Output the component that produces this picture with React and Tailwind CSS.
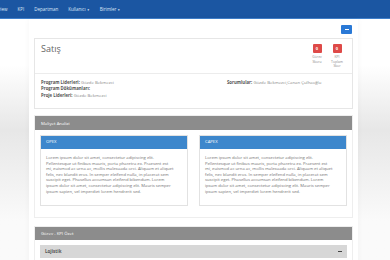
import React from "react";

const lorem = [
  "Lorem ipsum dolor sit amet, consectetur adipiscing elit.",
  "Pellentesque ut finibus mauris, porta pharetra ex. Praesent est",
  "mi, euismod ac urna ac, mollis malesuada orci. Aliquam et aliquet",
  "felis, nec blandit eros. In semper eleifend nulla, in placerat sem",
  "suscipit eget. Phasellus accumsan eleifend bibendum. Lorem",
  "ipsum dolor sit amet, consectetur adipiscing elit. Mauris semper",
  "ipsum sapien, vel imperdiet lorem hendrerit sed.",
];

const navItems = [
  { text: "Overview" },
  { text: "KPI" },
  { text: "Departman" },
  { text: "Kullanıcı", caret: true },
  { text: "Birimler", caret: true },
];

// Cost box (OPEX / CAPEX)
const CostBox = ({ title }) => (
  <div className="flex-1 border border-[#e2e2e2] bg-white">
    <div className="h-[13px] bg-[#3d87cc] flex items-center px-[5px] text-[4.2px] text-white">
      {title}
    </div>
    <div className="h-[56px] px-[5px] pt-[6px] text-[4.2px] text-[#737373]">
      {lorem.map((line, i) => (
        <div key={i} className="h-[5.6px] leading-[5.6px] whitespace-nowrap">{line}</div>
      ))}
    </div>
  </div>
);

const Badge = ({ label }) => (
  <div className="flex flex-col items-center w-[14px]">
    <div className="w-[9px] h-[9px] bg-[#de4a48] rounded-[1px] flex items-center justify-center text-[4px] font-bold text-white">
      0
    </div>
    <div className="mt-[2px] text-[3.4px] leading-[4.6px] text-[#8a8a8a] text-center">
      {label.map((l, i) => (
        <div key={i} className="h-[4.6px]">{l}</div>
      ))}
    </div>
  </div>
);

export default function App() {
  return (
    <div
      className="h-[260px] overflow-hidden bg-linear-to-b from-white from-25% via-[#e7e7e7] via-50% to-[#fafafa] to-85%"
      style={{ fontFamily: '"Open Sans", "Liberation Sans", sans-serif' }}
    >
      {/* Navbar */}
      <div className="h-[19px] bg-[#1b56a2] border-b border-[#3f7fcb] flex items-center">
        <div className="flex items-center -ml-[17px] text-[4.5px] text-[#dfe9f7]">
          {navItems.map((item) => (
            <span key={item.text} className="px-[5px] whitespace-nowrap">
              {item.text}
              {item.caret && <span className="ml-[1px] text-[3px]">▼</span>}
            </span>
          ))}
        </div>
      </div>

      {/* Content */}
      <div className="ml-[29px] w-[329px] bg-white px-[5px] pb-[10px] shadow-[0_0_6px_rgba(0,0,0,0.04)]">
        <div className="flex justify-end h-[19px] pt-[6px] pr-[1px]">
          <button className="w-[11px] h-[9px] bg-[#2a79d6] rounded-[1px] flex items-center justify-center">
            <span className="block w-[4px] h-[1px] bg-white" />
          </button>
        </div>

        {/* Satış card */}
        <div className="border border-[#e6e6e6] bg-white">
          <div className="h-[35px] flex justify-between px-[6px] border-b border-[#ececec]">
            <div className="pt-[3px] text-[9px] leading-[13px] text-[#666]">Satış</div>
            <div className="flex gap-[6px] pt-[5px] pr-[2px]">
              <Badge label={["Görev", "Skoru"]} />
              <Badge label={["KPI", "Toplam", "Skor"]} />
            </div>
          </div>
          <div className="flex px-[6px] pt-[5px] h-[34px] text-[4.3px] leading-[6.4px]">
            <div className="w-[186px]">
              <div className="h-[6.4px]">
                <span className="font-bold text-[#555]">Program Liderleri:</span>{" "}
                <span className="text-[#8a8a8a]">Gözde Bekmezci</span>
              </div>
              <div className="h-[6.4px]">
                <span className="font-bold text-[#555]">Program Dökümanları:</span>
              </div>
              <div className="h-[6.4px]">
                <span className="font-bold text-[#555]">Proje Liderleri:</span>{" "}
                <span className="text-[#8a8a8a]">Gözde Bekmezci</span>
              </div>
            </div>
            <div className="h-[6.4px]">
              <span className="font-bold text-[#555]">Sorumlular:</span>{" "}
              <span className="text-[#8a8a8a]">Gözde Bekmezci,Canan Çulhaoğlu</span>
            </div>
          </div>
        </div>

        {/* Maliyet Analizi */}
        <div className="mt-[6px] border border-[#eeeeee]">
          <div className="h-[14px] bg-[#8c8c8c] flex items-center px-[6px] text-[4.3px] text-white">
            Maliyet Analizi
          </div>
          <div className="flex gap-[11px] px-[5px] pt-[5px] pb-[11px]">
            <CostBox title="OPEX" />
            <CostBox title="CAPEX" />
          </div>
        </div>

        {/* Görev - KPI Özet */}
        <div className="mt-[8px] border border-[#eeeeee]">
          <div className="h-[13px] bg-[#8c8c8c] flex items-center px-[6px] text-[4.3px] text-white">
            Görev - KPI Özet
          </div>
          <div className="px-[5px] pt-[5px]">
            <div className="h-[13px] bg-[#d7d7d7] flex items-center justify-between px-[5px]">
              <span className="text-[4.5px] font-bold text-[#555]">Lojistik</span>
              <span className="block w-[4px] h-[1px] bg-[#444]" />
            </div>
            <div className="h-[30px]" />
          </div>
        </div>
      </div>
    </div>
  );
}
